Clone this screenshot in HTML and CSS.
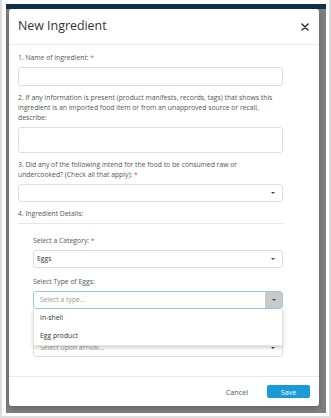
FILE: index.html
```html
<!DOCTYPE html>
<html>
<head>
<meta charset="utf-8">
<link rel="stylesheet" href="styles.css">
</head>
<body>
<div class="frame">
  <div class="backdrop">
    <div class="navbar"></div>
    <div class="modal">
      <div class="modal-header">
        <h1 class="modal-title">New Ingredient</h1>
        <svg class="close" width="8" height="8" viewBox="0 0 8 8"><path d="M1 1 L7 7 M7 1 L1 7" stroke="#333" stroke-width="1.5" stroke-linecap="round"/></svg>
      </div>
      <div class="modal-body">
        <div class="group">
          <label class="lbl required">1. Name of ingredient:</label>
          <div class="input"></div>
        </div>
        <div class="group">
          <label class="lbl">2. If any information is present (product manifests, records, tags) that shows this ingredient is an imported food item or from an unapproved source or recall, describe:</label>
          <div class="input textarea"></div>
        </div>
        <div class="group">
          <label class="lbl required">3. Did any of the following intend for the food to be consumed raw or undercooked? (Check all that apply):</label>
          <div class="input select"><span class="val"></span><span class="caret"></span></div>
        </div>
        <div class="group details">
          <label class="lbl">4. Ingredient Details:</label>
          <hr class="rule">
        </div>
        <div class="sub">
          <div class="group">
            <label class="lbl required">Select a Category:</label>
            <div class="input select"><span class="val">Eggs</span><span class="caret"></span></div>
          </div>
          <div class="group open">
            <label class="lbl">Select Type of Eggs:</label>
            <div class="input select focus"><span class="val ph">Select a type...</span><span class="btn"><span class="caret"></span></span></div>
            <ul class="menu">
              <li>In-shell</li>
              <li>Egg product</li>
            </ul>
          </div>
          <div class="group last">
            <div class="lbl-spacer"></div>
            <div class="input select"><span class="val ph">Select upon arrival...</span><span class="caret"></span></div>
          </div>
        </div>
      </div>
      <div class="modal-footer">
        <button class="cancel">Cancel</button>
        <button class="save">Save</button>
      </div>
    </div>
  </div>
</div>
</body>
</html>
```
FILE: styles.css
```css
html, body {
  margin: 0;
  padding: 0;
  background: #fff;
}
body {
  font-family: "Open Sans", "Liberation Sans", sans-serif;
  width: 331px;
  height: 418px;
  overflow: hidden;
}
.frame {
  box-sizing: border-box;
  width: 331px;
  height: 418px;
  border-left: 2px solid #dcdcdc;
  border-right: 2px solid #dcdcdc;
  border-bottom: 2px solid #dcdcdc;
  padding: 4px 3px 3px 4px;
}
.backdrop {
  background: #7f7f7f;
  height: 409px;
  display: flex;
  flex-direction: column;
}
.navbar {
  height: 5px;
  background: #132f4c;
  flex: none;
}
.modal {
  margin: 0 7px 0 3px;
  height: 397px;
  background: #fff;
  border-radius: 3px;
  display: flex;
  flex-direction: column;
  box-shadow: 0 2px 6px rgba(0,0,0,0.25);
}
.modal-header {
  height: 36px;
  box-sizing: border-box;
  border-bottom: 1px solid #e8e8e8;
  display: flex;
  align-items: center;
  justify-content: space-between;
  padding: 0 10px 0 9px;
  flex: none;
}
.modal-title {
  margin: 0;
  font-size: 12.4px;
  font-weight: 400;
  color: #333;
  line-height: 1;
}
.close {
  display: block;
  margin-top: 1px;
}
.modal-body {
  flex: 1;
  padding: 7.5px 36px 0 9px;
}
.group {
  margin-bottom: 7px;
  position: relative;
}
.lbl {
  display: block;
  font-size: 6.8px;
  line-height: 10px;
  color: #555;
  margin-bottom: 4px;
}
.lbl.required::after {
  content: " *";
  color: #d9534f;
}
.lbl-spacer {
  height: 10px;
  margin-bottom: 4px;
}
.input {
  box-sizing: border-box;
  height: 19px;
  border: 1px solid #dedede;
  border-radius: 3px;
  background: #fff;
}
.textarea {
  height: 26px;
}
.select {
  height: 18px;
  display: flex;
  align-items: center;
  justify-content: space-between;
  padding: 0 0 0 3px;
  font-size: 6.8px;
  color: #333;
}
.select .caret {
  width: 0;
  height: 0;
  border-left: 2.5px solid transparent;
  border-right: 2.5px solid transparent;
  border-top: 2.5px solid #444;
  margin-right: 7px;
}
.val.ph {
  color: #999;
  padding-left: 3px;
}
.details {
  margin-bottom: 12px;
}
.details .lbl {
  margin-bottom: 4px;
}
.rule {
  border: 0;
  border-top: 1px solid #e5e5e5;
  margin: 0;
}
.sub {
  padding-left: 15px;
}
.sub .group {
  margin-bottom: 9px;
}
.focus {
  border-color: #9cc6ea;
  padding-right: 0;
}
.focus .btn {
  width: 17px;
  align-self: stretch;
  background: #c9c9c9;
  display: flex;
  align-items: center;
  justify-content: center;
  border-radius: 0 2px 2px 0;
}
.focus .btn .caret {
  margin: 0;
}
.menu {
  position: absolute;
  left: 0;
  right: 0;
  top: 32px;
  margin: 0;
  padding: 0;
  list-style: none;
  background: #fff;
  border: 1px solid #e2e2e2;
  border-top: 0;
  box-shadow: 0 2px 4px rgba(0,0,0,0.18);
  z-index: 5;
}
.menu li {
  height: 18px;
  line-height: 18px;
  padding-left: 6px;
  font-size: 6.8px;
  color: #333;
}
.group.open {
  margin-bottom: 16px;
}
.group.last {
  margin-bottom: 0;
}
.modal-footer {
  flex: none;
  height: 30px;
  box-sizing: border-box;
  border-top: 1px solid #e8e8e8;
  display: flex;
  align-items: center;
  justify-content: flex-end;
  padding: 0 9px 0 0;
  gap: 19px;
}
.cancel {
  border: 0;
  background: none;
  padding: 0;
  font-family: inherit;
  font-size: 7.2px;
  color: #555;
}
.save {
  border: 0;
  border-radius: 2px;
  background: #1b9ad6;
  color: #fff;
  font-family: inherit;
  font-size: 7.2px;
  width: 43px;
  height: 13px;
  padding: 0;
}
```
